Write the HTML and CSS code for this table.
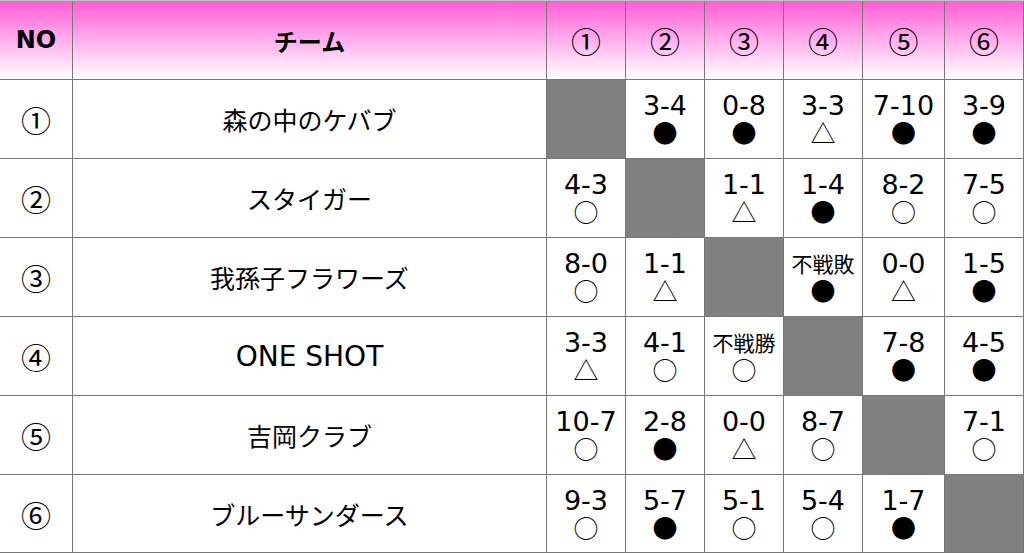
FILE: index.html
```html
<!DOCTYPE html>
<html lang="ja">
<head>
<meta charset="utf-8">
<title>対戦表</title>
<link rel="stylesheet" href="styles.css">
</head>
<body>
<div class="board">
  <div class="c h no">NO</div>
  <div class="c h team">チーム</div>
  <div class="c h num">①</div>
  <div class="c h num">②</div>
  <div class="c h num">③</div>
  <div class="c h num">④</div>
  <div class="c h num">⑤</div>
  <div class="c h num">⑥</div>

  <div class="c num">①</div>
  <div class="c name">森の中のケバブ</div>
  <div class="c x"></div>
  <div class="c r"><span class="s">3-4</span><span class="m">●</span></div>
  <div class="c r"><span class="s">0-8</span><span class="m">●</span></div>
  <div class="c r"><span class="s">3-3</span><span class="m">△</span></div>
  <div class="c r"><span class="s">7-10</span><span class="m">●</span></div>
  <div class="c r"><span class="s">3-9</span><span class="m">●</span></div>

  <div class="c num">②</div>
  <div class="c name">スタイガー</div>
  <div class="c r"><span class="s">4-3</span><span class="m">○</span></div>
  <div class="c x"></div>
  <div class="c r"><span class="s">1-1</span><span class="m">△</span></div>
  <div class="c r"><span class="s">1-4</span><span class="m">●</span></div>
  <div class="c r"><span class="s">8-2</span><span class="m">○</span></div>
  <div class="c r"><span class="s">7-5</span><span class="m">○</span></div>

  <div class="c num">③</div>
  <div class="c name">我孫子フラワーズ</div>
  <div class="c r"><span class="s">8-0</span><span class="m">○</span></div>
  <div class="c r"><span class="s">1-1</span><span class="m">△</span></div>
  <div class="c x"></div>
  <div class="c r"><span class="s jp">不戦敗</span><span class="m">●</span></div>
  <div class="c r"><span class="s">0-0</span><span class="m">△</span></div>
  <div class="c r"><span class="s">1-5</span><span class="m">●</span></div>

  <div class="c num">④</div>
  <div class="c name latin">ONE SHOT</div>
  <div class="c r"><span class="s">3-3</span><span class="m">△</span></div>
  <div class="c r"><span class="s">4-1</span><span class="m">○</span></div>
  <div class="c r"><span class="s jp">不戦勝</span><span class="m">○</span></div>
  <div class="c x"></div>
  <div class="c r"><span class="s">7-8</span><span class="m">●</span></div>
  <div class="c r"><span class="s">4-5</span><span class="m">●</span></div>

  <div class="c num">⑤</div>
  <div class="c name">吉岡クラブ</div>
  <div class="c r"><span class="s">10-7</span><span class="m">○</span></div>
  <div class="c r"><span class="s">2-8</span><span class="m">●</span></div>
  <div class="c r"><span class="s">0-0</span><span class="m">△</span></div>
  <div class="c r"><span class="s">8-7</span><span class="m">○</span></div>
  <div class="c x"></div>
  <div class="c r"><span class="s">7-1</span><span class="m">○</span></div>

  <div class="c num">⑥</div>
  <div class="c name">ブルーサンダース</div>
  <div class="c r"><span class="s">9-3</span><span class="m">○</span></div>
  <div class="c r"><span class="s">5-7</span><span class="m">●</span></div>
  <div class="c r"><span class="s">5-1</span><span class="m">○</span></div>
  <div class="c r"><span class="s">5-4</span><span class="m">○</span></div>
  <div class="c r"><span class="s">1-7</span><span class="m">●</span></div>
  <div class="c x"></div>
</div>
</body>
</html>
```

FILE: styles.css
```css
html, body {
  margin: 0;
  padding: 0;
  background: #ffffff;
}

.board {
  width: 1024px;
  height: 553px;
  box-sizing: border-box;
  border-top: 1px solid #c4c4c4;
  display: grid;
  grid-template-columns: 73px 474px 79px 79px 79px 79px 82px 79px;
  grid-template-rows: 79px 79px 79px 79px 79px 79px 78px;
  color: #000;
  font-family: "Noto Sans CJK JP", sans-serif;
}

.c {
  box-sizing: border-box;
  border-right: 1px solid #777777;
  border-bottom: 1px solid #777777;
  display: flex;
  flex-direction: column;
  align-items: center;
  justify-content: center;
  background: #ffffff;
}

.h {
  background: linear-gradient(to bottom, #ff5cd6 0%, #ffa6eb 45%, #ffffff 100%);
}

.no {
  font-family: "DejaVu Sans", sans-serif;
  font-weight: 700;
  font-size: 24px;
}

.team {
  font-weight: 700;
  font-size: 24px;
}

.num {
  font-size: 30px;
  line-height: 32px;
}

.name {
  font-size: 25px;
}

.name.latin {
  font-family: "DejaVu Sans", sans-serif;
  font-size: 28px;
}

.x {
  background: #808080;
}

.s {
  font-family: "DejaVu Sans", sans-serif;
  font-size: 27px;
  line-height: 27px;
  height: 27px;
}

.s.jp {
  font-family: "Noto Sans CJK JP", sans-serif;
  font-size: 21px;
}

.m {
  font-size: 25px;
  line-height: 27px;
  height: 27px;
}
```
